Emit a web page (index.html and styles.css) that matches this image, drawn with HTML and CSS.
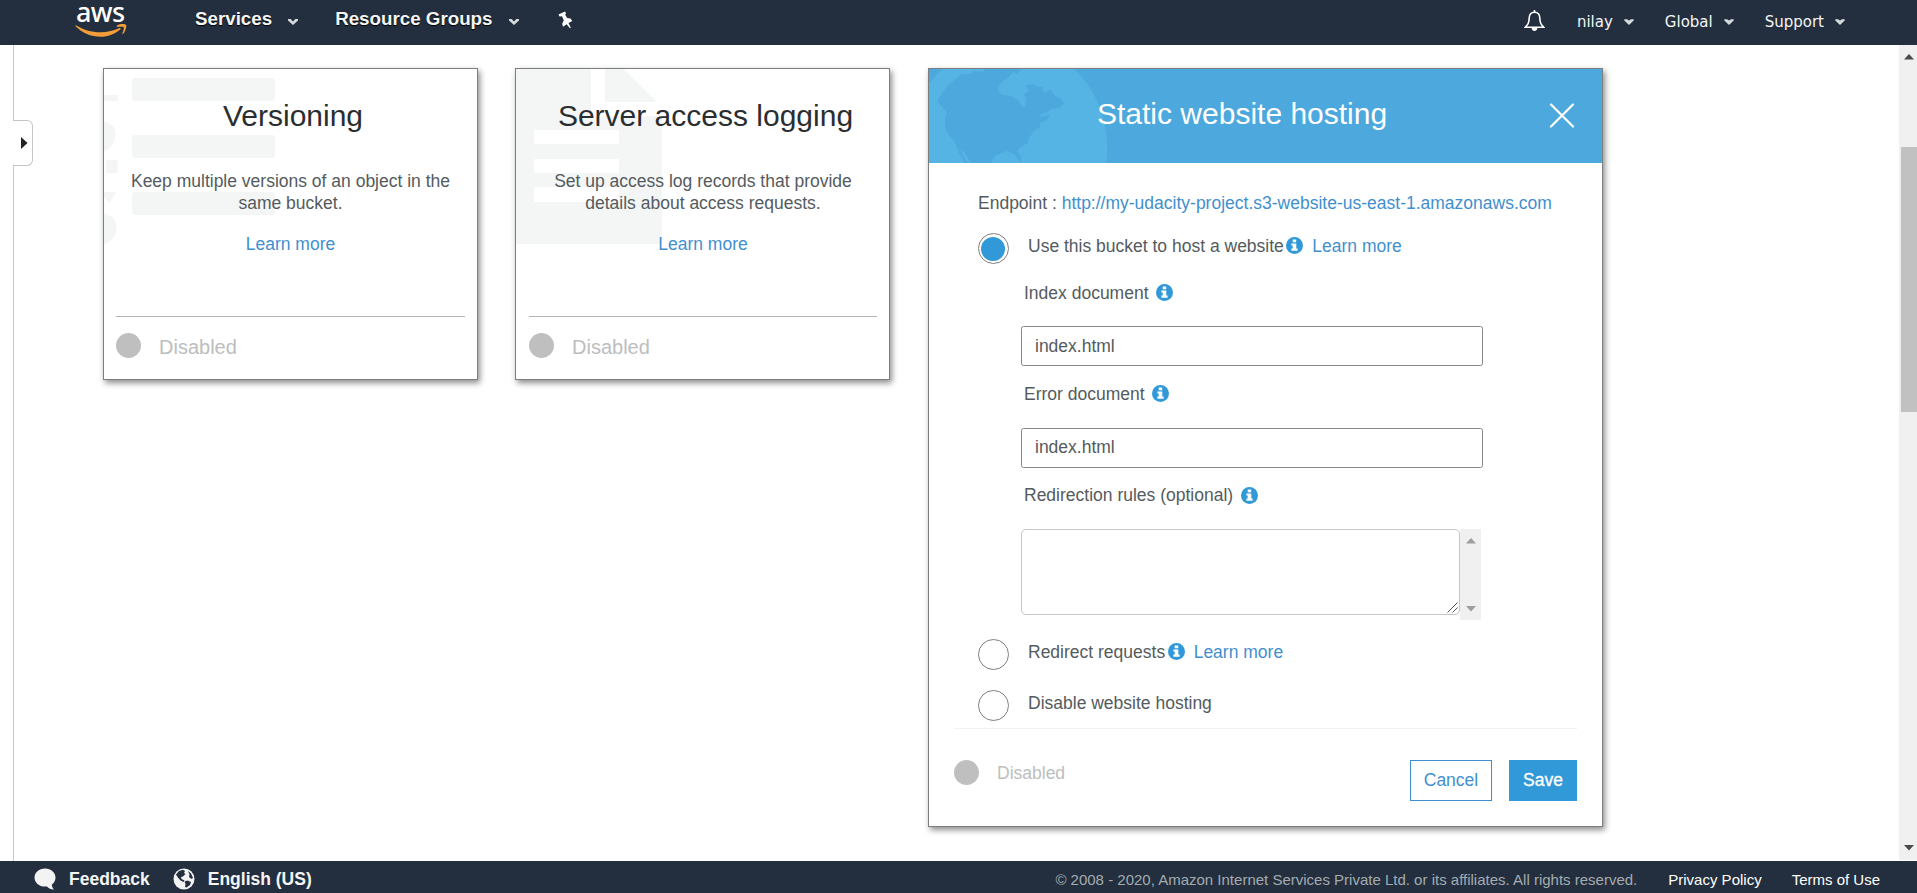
FILE: index.html
```html
<!DOCTYPE html>
<html lang="en">
<head>
<meta charset="utf-8">
<title>S3 Management Console</title>
<link rel="stylesheet" href="styles.css">
</head>
<body>
<svg class="defs" width="0" height="0" aria-hidden="true">
  <symbol id="caret" viewBox="0 0 12 8"><path d="M1 1h2.600L6 3.600 8.400 1H11v1.400L6 7 1 2.400z"/></symbol>
  <symbol id="caret-solid" viewBox="0 0 10 6"><path d="M.3.300H3L5 1.400 7 .300h2.700v1.200L5 6 .300 1.500z"/></symbol>
  <symbol id="info" viewBox="0 0 17 17"><circle cx="8.500" cy="8.500" r="8.500" fill="#3199d8"/><path fill="#fff" d="M6.700 2.400h3.500v2.800H6.700zM5.400 6.400h4.900v5.200h1.300v2.200H5.400v-2.200h1.300V8.600H5.400z"/></symbol>
  <symbol id="up" viewBox="0 0 10 6"><path d="M5 0l5 5.500H0z"/></symbol>
  <symbol id="down" viewBox="0 0 10 6"><path d="M5 5.500L10 0H0z"/></symbol>
</svg>

<header class="topbar">
  <div class="logo">
    <span class="logo-text">aws</span>
    <svg class="smile" width="52" height="14" viewBox="0 0 52 14"><path fill="#f29d38" d="M1 1.300c7 4.500 15.500 7 24.500 7 7 0 13.500-1.600 19-4.200.9-.4 1.600.6.800 1.300C40 9.800 33 12.700 25.500 12.700 16 12.700 7 9 .600 2.300.100 1.700.500 1 1 1.300zM42 1.400C44.500-.2 50-.400 51 .700c1 1.200-.4 7-3 9.200-.5.400-.9.200-.7-.3.700-1.700 2-5.300 1.400-6.200-.7-.9-4.500-.6-6.200-.4-.8.100-1-1.200-.5-1.600z"/></svg>
  </div>
  <nav class="nav-main">
    <a class="nav-link">Services<svg class="caret" width="12" height="8"><use href="#caret"/></svg></a>
    <a class="nav-link groups">Resource Groups<svg class="caret" width="12" height="8"><use href="#caret"/></svg></a>
    <svg class="pin" width="18" height="18" viewBox="0 0 18 18"><path fill="#fff" d="M1.500 3.500L8 .500l1 1.700-.8 1.500 2 3.300 3.300.4 1.800 2.500-3.800 2.100 2.300 4.700-.9.500-3.200-4-3.700 2.600-.8-3 1.600-3.500L5 5.200l-2.500.2z"/></svg>
  </nav>
  <nav class="nav-user">
    <svg class="bell" width="21" height="22" viewBox="0 0 21 22" fill="none" stroke="#fff" stroke-width="1.600"><path d="M10.500 2.200C7 2.200 5.300 4.800 5.200 8c-.1 5-1.300 6.500-3.900 9.300h18.400C17.100 14.500 15.900 13 15.800 8c-.1-3.200-1.800-5.800-5.300-5.800z"/><path d="M10.500 0v2.500"/><path fill="#fff" stroke="none" d="M7.600 18h5.800c0 1.800-1.300 2.900-2.900 2.900S7.600 19.800 7.600 18z"/></svg>
    <a class="user-link name">nilay<svg class="caret" width="10" height="6"><use href="#caret-solid"/></svg></a>
    <a class="user-link region">Global<svg class="caret" width="10" height="6"><use href="#caret-solid"/></svg></a>
    <a class="user-link">Support<svg class="caret" width="10" height="6"><use href="#caret-solid"/></svg></a>
  </nav>
</header>

<div class="workspace">
  <aside class="rail">
    <div class="rail-line top"></div>
    <div class="rail-tab"><svg width="7" height="12" viewBox="0 0 7 12"><path fill="#222" d="M0 0l6.500 6L0 12z"/></svg></div>
    <div class="rail-line rest"></div>
  </aside>

  <main class="cards">
    <section class="card small">
      <svg class="watermark" width="180" height="180" viewBox="0 0 180 180" fill="#f4f6f6"><rect x="28" y="9" width="143" height="23" rx="3"/><rect x="28" y="66" width="143" height="23" rx="3"/><rect x="28" y="123" width="143" height="23" rx="3"/><path d="M0 26h14v6H0zM0 53c8 1 12 6 11.500 13C11 73 7 79 0 83zM2 91h11.500v13H2zM0 123h12l-6 11L0 129zM0 145c8 1 12.500 6 12.500 13 0 8-5 15-12.500 17z"/></svg>
      <h2>Versioning</h2>
      <p>Keep multiple versions of an object in the same bucket.</p>
      <a class="link more">Learn more</a>
      <div class="status"><span class="dot"></span><span>Disabled</span></div>
    </section>

    <section class="card small logging">
      <svg class="watermark" width="180" height="180" viewBox="0 0 180 180" fill="#f4f6f6"><path fill-rule="evenodd" d="M0 0h75v47h71v128H0zM18 64v9c0 1.500.7 2 2 2h81c1.500 0 2-.5 2-2v-10c0-1.500-.5-2-2-2H20c-1.300 0-2 .5-2 2zM18 92v10c0 1.500.7 2 2 2h81c1.500 0 2-.5 2-2V92c0-1.500-.5-2-2-2H20c-1.300 0-2 .5-2 2zM18 120v11c0 1.500.7 2 2 2h81c1.500 0 2-.5 2-2v-11c0-1.500-.5-2-2-2H20c-1.300 0-2 .5-2 2z"/><path d="M89 0h19l33 33H89z"/></svg>
      <h2>Server access logging</h2>
      <p>Set up access log records that provide details about access requests.</p>
      <a class="link more">Learn more</a>
      <div class="status"><span class="dot"></span><span>Disabled</span></div>
    </section>

    <section class="card hosting">
      <div class="hosting-head">
        <svg class="watermark" width="200" height="94" viewBox="0 0 200 94"><path fill="#56b4e4" d="M0 14C5 9 9 4 13 0h132c20 18 33 46 33 78 0 6 0 11-1 16H0z"/><path fill="#4da8de" d="M8 32L13 24 20 15 27 10 32 5 40 5 46 2 54 3 56 0H92L88 5 84 3 80 8 74 12 70 17 69 22 74 26 82 27 89 31 93 37 96 38 97 30 95 25 100 22 97 16 104 15 109 18 113 18 115 24 121 20 126 27 132 30 135 35 130 39 123 40 118 43 112 45 111 48 121 46 118 51 111 54 111 58 105 62 100 69 99 74 92 78 88 82 91 86 93 94 89 90 85 85 78 82 74 84 67 86 63 91V94H42L35 83 31 79 34 87 39 94H36L29 82 25 72 19 65 16 58V47L18 44z"/></svg>
        <h2>Static website hosting</h2>
        <svg class="close" width="26" height="26" viewBox="0 0 26 26" fill="none" stroke="#fff" stroke-width="2.200" stroke-linecap="round"><path d="M2 1.500l22 22M24 1.500l-22 22"/></svg>
      </div>
      <div class="form">
        <div class="endpoint">Endpoint : <a class="link">http://my-udacity-project.s3-website-us-east-1.amazonaws.com</a></div>
        <div class="option first"><span class="radio on"></span><span class="option-text">Use this bucket to host a website<svg class="info tight" width="17" height="17"><use href="#info"/></svg><a class="link">Learn more</a></span></div>
        <div class="fields">
          <div class="label">Index document<svg class="info" width="17" height="17"><use href="#info"/></svg></div>
          <div class="field">index.html</div>
          <div class="label second">Error document<svg class="info" width="17" height="17"><use href="#info"/></svg></div>
          <div class="field raised">index.html</div>
          <div class="label third">Redirection rules (optional)<svg class="info" width="17" height="17"><use href="#info"/></svg></div>
          <div class="rules">
            <div class="rules-box"><svg width="11" height="11" viewBox="0 0 11 11" stroke="#555" stroke-width="1"><path d="M.5 10.500l10-10M5.500 10.500l5-5"/></svg></div>
            <div class="rules-scroll"><svg width="10" height="6"><use href="#up"/></svg><svg width="10" height="6"><use href="#down"/></svg></div>
          </div>
        </div>
        <div class="option redirect"><span class="radio"></span><span class="option-text">Redirect requests<svg class="info tight" width="17" height="17"><use href="#info"/></svg><a class="link">Learn more</a></span></div>
        <div class="option disable"><span class="radio"></span><span class="option-text">Disable website hosting</span></div>
      </div>
      <div class="hosting-foot">
        <span class="dot"></span><span class="foot-status">Disabled</span>
        <a class="btn cancel">Cancel</a>
        <a class="btn save">Save</a>
      </div>
    </section>
  </main>

  <div class="page-scroll">
    <svg class="arrow" width="10" height="6"><use href="#up"/></svg>
    <div class="thumb"></div>
    <svg class="arrow low" width="10" height="6"><use href="#down"/></svg>
  </div>
</div>

<footer class="bottombar">
  <svg class="bubble" width="22" height="22" viewBox="0 0 22 22"><path fill="#f3f3f3" d="M11 .500c6 0 10.500 4 10.500 9 0 3-1.400 5.400-3.600 7-.2 1.800.5 3.500 2.100 5-3 0-5.500-1-7-3l-2 .1C5 18.600.500 14.500.500 9.500s4.500-9 10.500-9z"/></svg>
  <a class="foot-strong">Feedback</a>
  <svg class="globe" width="22" height="22" viewBox="0 0 22 22"><circle cx="11" cy="11" r="10.500" fill="#f3f3f3"/><path fill="#232f3e" d="M3 6.500l3-3.500 4-1.200 2 1.200-1 2 1.500 1L10 8.500 8 9l.5 2 3 1.500-1 1.500-3-1.500-3-3.500zM15 3l3 2.500 2 4.500-1.500 1-2.500-2 .5-2.500zM11.500 13.500l3-1 3.500 1.500-1 3-3.500 2.500-1.500-.5.500-3z"/></svg>
  <a class="foot-strong">English (US)</a>
  <span class="copyright">© 2008 - 2020, Amazon Internet Services Private Ltd. or its affiliates. All rights reserved.</span>
  <a class="legal">Privacy Policy</a>
  <a class="legal terms">Terms of Use</a>
</footer>
</body>
</html>
```
FILE: styles.css
```css
* { box-sizing: border-box; }

body {
  margin: 0;
  height: 893px;
  overflow: hidden;
  display: flex;
  flex-direction: column;
  background: #fff;
  font: 17.5px/22px Arial, "Liberation Sans", sans-serif;
  color: #545b5e;
}

svg { display: block; flex: none; }
.defs { position: absolute; }
h2, p { margin: 0; }
.link { color: #428fce; }

/* Top navigation */
.topbar {
  flex: none;
  height: 45px;
  display: flex;
  justify-content: space-between;
  background: #232f3e;
  color: #f5f5f5;
  fill: #d5dadd;
}
.logo { width: 195px; padding-left: 75px; flex: none; }
.logo-text {
  display: block;
  height: 24px;
  padding-left: 1px;
  font: 500 27px/24px "Noto Sans", "Open Sans", sans-serif;
  letter-spacing: -0.6px;
  color: #fff;
}
.nav-main { display: flex; flex: 1; padding-top: 8px; }
.nav-link {
  display: flex;
  font-size: 18.75px;
  font-weight: bold;
  text-shadow: 0 1px 1px #000;
}
.nav-link .caret { margin: 10px 0 0 15px; }
.groups { margin-left: 36px; }
.pin { margin: 3px 0 0 37px; }
.nav-user {
  display: flex;
  padding: 11px 72px 0 0;
  font: 15px/22px Verdana, "DejaVu Sans", sans-serif;
}
.bell { margin: -1px 32px 0 0; }
.user-link { display: flex; }
.user-link .caret { margin: 8px 0 0 11px; }
.name, .region { margin-right: 31px; }

/* Workspace */
.workspace { height: 816px; flex: none; display: flex; }
.rail { width: 103px; flex: none; padding-left: 13px; }
.rail-line { border-left: 1px solid #c9c9c9; }
.rail-line.top { height: 75px; }
.rail-line.rest { height: 695px; }
.rail-tab {
  width: 20px;
  height: 46px;
  padding: 16px 0 0 8px;
  border: 1px solid #c4c4c4;
  border-left: 0;
  border-radius: 0 6px 6px 0;
}
.cards { display: flex; align-items: flex-start; gap: 37px; padding-top: 23px; flex: 1; }
.card {
  position: relative;
  background: #fff;
  border: 1px solid #7b7f80;
  box-shadow: 2px 3px 6px rgba(0, 0, 0, .45);
}
.watermark { position: absolute; left: 0; top: 0; }
.card h2, .card p, .more { position: relative; }
.card h2 { font-size: 30px; line-height: 36px; font-weight: normal; color: #2b2e30; }

.small { width: 375px; height: 312px; padding: 29px 12px 0; text-align: center; }
.logging { padding-left: 13px; }
.small + .hosting { margin-left: 1px; }
.small h2 { padding-left: 5px; }
.small p { margin: 36px 10px 0; }
.more { display: block; margin-top: 19px; }
.status {
  display: flex;
  margin-top: 61px;
  padding-top: 16px;
  border-top: 1px solid #b3b5b5;
  font-size: 20px;
  line-height: 28px;
  color: #bcbebe;
}
.dot { width: 25px; height: 25px; margin-right: 18px; border-radius: 50%; background: #bfbfbf; }

/* Static website hosting panel */
.hosting { width: 675px; height: 759px; }
.hosting-head {
  position: relative;
  height: 94px;
  display: flex;
  justify-content: space-between;
  padding: 27px 27px 0 168px;
  background: #4da8de;
}
.hosting-head h2 { color: #fff; }
.close { margin-top: 7px; }
.form { padding: 29px 0 0 49px; }
.endpoint { white-space: nowrap; }
.option { display: flex; height: 31px; }
.option.first { margin-top: 19px; }
.option.redirect { margin-top: 19px; }
.option.disable { margin-top: 20px; }
.radio { width: 31px; height: 31px; margin-right: 19px; border: 1px solid #808080; border-radius: 50%; }
.radio.on { padding: 3px 3px 2px 2px; }
.radio.on::before {
  content: "";
  display: block;
  width: 24px;
  height: 24px;
  border-radius: 50%;
  background: #3199d8;
}
.option-text { display: flex; padding-top: 2px; }
.info { margin: 2px 0 0 7px; }
.third .info { margin: 3px 0 0 8px; }
.info.tight { margin: 2px 9px 0 2.500px; }
.fields { width: 505px; padding: 18px 0 0 43px; }
.label { display: flex; padding-left: 3px; }
.label.second { margin-top: 17px; }
.label.third { margin-top: 16px; }
.field {
  height: 40px;
  margin-top: 22px;
  padding: 8px 13px;
  border: 1px solid #868889;
  border-radius: 2.500px;
}
.field.raised { margin-top: 23px; padding-top: 7px; }
.rules { display: flex; height: 91px; margin-top: 23px; }
.rules-box {
  width: 439px;
  height: 86px;
  display: flex;
  justify-content: flex-end;
  align-items: flex-end;
  padding: 1px;
  border: 1px solid #c6c6c6;
  border-radius: 5px;
}
.rules-scroll {
  width: 21px;
  display: flex;
  flex-direction: column;
  justify-content: space-between;
  align-items: center;
  padding: 9px 0 8px;
  background: #f0f0f0;
  fill: #9d9d9d;
}
.hosting-foot {
  display: flex;
  margin: 7px 25px 0;
  padding-top: 31px;
  border-top: 1px solid #f2f2f2;
}
.foot-status { flex: 1; padding-top: 2px; color: #bcbebe; }
.btn { height: 41px; border: 1px solid #3d90cc; line-height: 39px; text-align: center; }
.cancel { width: 82px; margin-right: 17px; color: #428fce; }
.save { width: 68px; background: #3199d8; border-color: #3199d8; color: #fff; -webkit-text-stroke: .3px #fff; }

/* Page scrollbar */
.page-scroll {
  width: 18px;
  flex: none;
  height: 815px;
  display: flex;
  flex-direction: column;
  align-items: flex-end;
  padding-top: 9px;
  background: #f0f0f0;
}
.arrow { margin-right: 3px; fill: #4a4a4a; }
.thumb { width: 16px; height: 265px; margin-top: 87px; background: #c1c1c1; }
.low { margin-top: 433px; }

/* Bottom bar */
.bottombar {
  flex: none;
  height: 32px;
  display: flex;
  padding: 7px 37px 0 34px;
  background: #232f3e;
  color: #f5f5f5;
}
.bubble { margin-right: 13px; }
.globe { margin: 0 13px 0 23px; }
.foot-strong { font-weight: bold; }
.copyright { margin-left: auto; font-size: 15px; line-height: 24px; color: #a3abb0; }
.legal { margin-left: 31px; font-size: 15px; line-height: 24px; color: #fff; }
.terms { margin-left: 30px; }
```
